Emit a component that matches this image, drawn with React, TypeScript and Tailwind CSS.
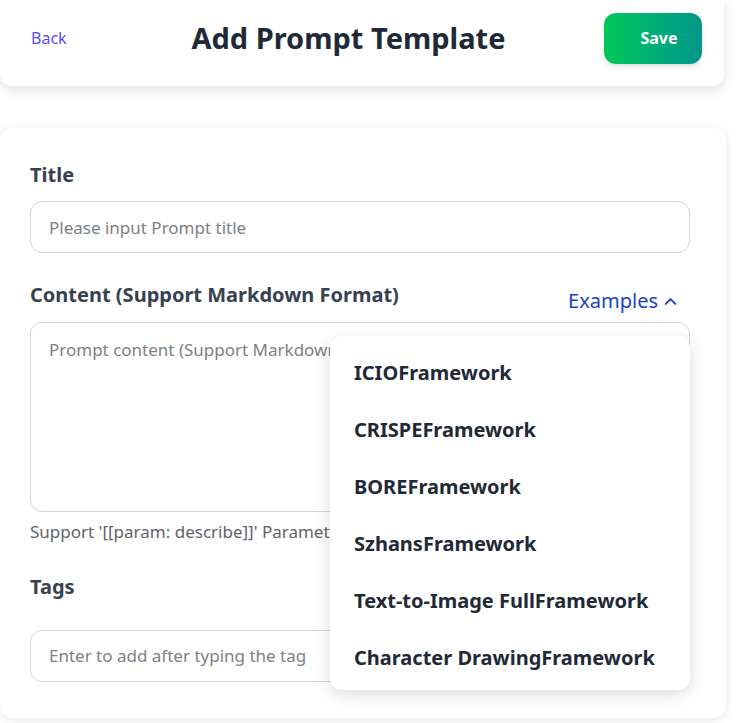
import React, { useState } from 'react';
import { ChevronUp } from 'lucide-react';

const examples = [
  'ICIOFramework',
  'CRISPEFramework',
  'BOREFramework',
  'SzhansFramework',
  'Text-to-Image FullFramework',
  'Character DrawingFramework',
];

export default function App() {
  const [open, setOpen] = useState(true);

  return (
    <div className="min-h-screen bg-white font-['Noto_Sans',sans-serif]">
      {/* Header */}
      <header className="w-[724px] h-[86px] bg-white rounded-b-xl shadow-[0_4px_12px_rgba(0,0,0,0.12)] flex items-center justify-between pl-[31px] pr-[22px] pb-[10px]">
        <a href="#" className="text-[16px] text-[#5b4cf5] w-[98px]">Back</a>
        <h1 className="text-[29px] font-bold text-[#1f2937] -translate-x-[18px]">Add Prompt Template</h1>
        <button className="w-[98px] h-[51px] rounded-xl bg-gradient-to-r from-[#00c853] to-[#00968a] text-white font-bold text-[16px] pl-[12px] shadow-md">
          Save
        </button>
      </header>

      {/* Form card */}
      <div className="mt-[42px] w-[726px] h-[590px] bg-white rounded-xl shadow-[0_2px_8px_rgba(0,0,0,0.10)] pl-[30px] pr-[36px] pt-[32px]">
        <label className="block text-[20px] font-bold text-[#374151]">Title</label>
        <input
          className="mt-[11px] w-full h-[52px] rounded-xl border border-[#d1d5db] px-[18px] text-[17px] text-[#374151] placeholder:text-[#7b7f86] outline-none"
          placeholder="Please input Prompt title"
        />

        <div className="relative mt-[27px]">
          <div className="flex items-end justify-between">
            <label className="block text-[20px] font-bold text-[#374151]">Content (Support Markdown Format)</label>
            <button
              onClick={() => setOpen(!open)}
              className="flex items-center gap-[3px] text-[20px] text-[#1a3fc4] pr-[10px] -mb-[6px]"
            >
              Examples
              <ChevronUp className="w-[19px] h-[19px]" strokeWidth={2.5} />
            </button>
          </div>
          <textarea
            className="mt-[12px] block w-full h-[190px] rounded-xl border border-[#d1d5db] px-[18px] py-[14px] text-[17px] resize-none placeholder:text-[#7b7f86] outline-none"
            placeholder="Prompt content (Support Markdown Format)"
          />
          <p className="mt-[7px] text-[17px] text-[#5f6368] whitespace-nowrap">Support '[[param: describe]]' Parameter Syntax</p>

          {open && (
            <div className="absolute left-[300px] top-[56px] w-[360px] bg-white rounded-xl shadow-[0_4px_16px_rgba(0,0,0,0.14)] pl-[24px] pt-[8px] pb-[4px] z-10">
              {examples.map((e) => (
                <div key={e} className="h-[57px] flex items-center text-[20px] font-bold text-[#1f2937]">
                  {e}
                </div>
              ))}
            </div>
          )}
        </div>

        <label className="block mt-[27px] text-[20px] font-bold text-[#374151]">Tags</label>
        <input
          className="mt-[28px] w-full h-[52px] rounded-xl border border-[#d1d5db] px-[18px] text-[17px] placeholder:text-[#7b7f86] outline-none"
          placeholder="Enter to add after typing the tag"
        />
      </div>
    </div>
  );
}
